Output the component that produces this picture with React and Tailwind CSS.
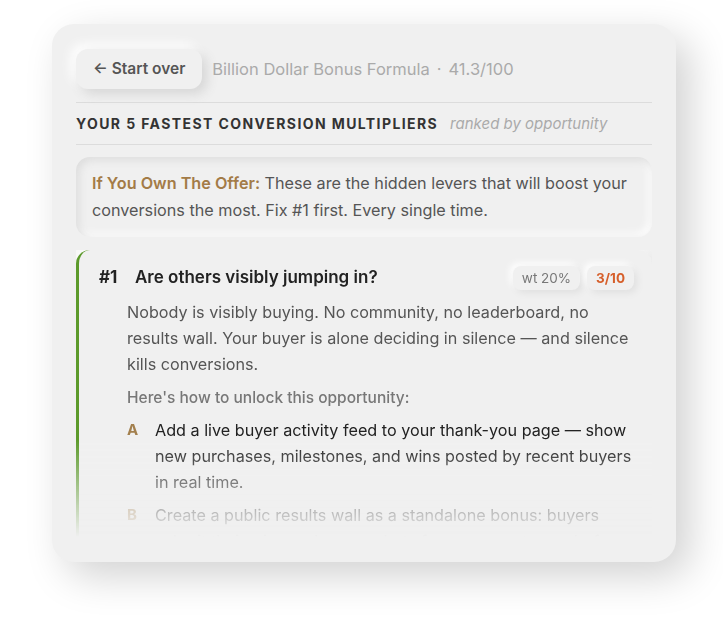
export default function App() {
  return (
    <div className="min-h-[619px] w-full bg-white pt-[24px] pl-[52px]" style={{ fontFamily: "Inter, 'Noto Sans', sans-serif" }}>
      <div className="w-[624px] h-[538px] overflow-hidden rounded-[22px] bg-[#f0f0f0] px-[24px] pt-[25px] shadow-[14px_14px_40px_#d2d2d2,-14px_-14px_40px_#ffffff]">
        <div className="flex items-center gap-[10px]">
          <button className="h-[40px] rounded-[12px] bg-[#f0f0f0] px-[17px] text-[15.5px] font-semibold text-[#555] shadow-[5px_5px_12px_#d6d6d6,-5px_-5px_12px_#ffffff]">
            ← Start over
          </button>
          <div className="text-[16.5px] text-[#aaa]">
            Billion Dollar Bonus Formula<span className="mx-[7px]">·</span>41.3/100
          </div>
        </div>
        <div className="mt-[13px] border-t border-[#dcdcdc]" />
        <div className="flex items-baseline gap-[12px] py-[12px] leading-[17px]">
          <div className="text-[14px] font-bold tracking-[0.1em] text-[#333]">YOUR 5 FASTEST CONVERSION MULTIPLIERS</div>
          <div className="text-[15px] italic text-[#aaa]">ranked by opportunity</div>
        </div>
        <div className="border-t border-[#dcdcdc]" />
        <div className="mt-[12px] rounded-[14px] bg-[#f0f0f0] px-[16px] py-[13px] text-[16.2px] leading-[27px] text-[#555] shadow-[inset_3px_3px_8px_#dcdcdc,inset_-3px_-3px_8px_#ffffff]">
          <span className="font-semibold text-[#a37b47]">If You Own The Offer:</span> These are the hidden levers that will boost your conversions the most. Fix #1 first. Every single time.
        </div>
        <div className="mt-[13px] h-[287px] [mask-image:linear-gradient(to_bottom,black_66%,transparent_100%)]">
          <div className="rounded-[14px] border-l-[3px] border-[#5c9a2b] bg-[#f0f0f0] pl-[20px] pr-[18px] pt-[15px] pb-[20px] shadow-[4px_4px_12px_#e2e2e2,-4px_-4px_12px_#ffffff]">
            <div className="flex items-center">
              <div className="w-[36px] text-[17px] font-bold text-[#222]">#1</div>
              <div className="flex-1 text-[17px] font-semibold text-[#222]">Are others visibly jumping in?</div>
              <div className="flex gap-[7px]">
                <span className="rounded-[8px] bg-[#f0f0f0] px-[9px] py-[2px] text-[13.5px] text-[#777] shadow-[3px_3px_7px_#e0e0e0,-3px_-3px_7px_#ffffff]">wt 20%</span>
                <span className="rounded-[8px] bg-[#f0f0f0] px-[9px] py-[2px] text-[13.5px] font-bold text-[#d65f2b] shadow-[3px_3px_7px_#e0e0e0,-3px_-3px_7px_#ffffff]">3/10</span>
              </div>
            </div>
            <div className="pl-[28px]">
              <p className="mt-[8px] text-[16.2px] leading-[26px] text-[#555]">
                Nobody is visibly buying. No community, no leaderboard, no results wall. Your buyer is alone deciding in silence — and silence kills conversions.
              </p>
              <p className="mt-[9px] text-[15.5px] font-medium text-[#777]">Here's how to unlock this opportunity:</p>
              <div className="mt-[8px] flex">
                <span className="w-[28px] shrink-0 text-[15px] font-bold leading-[26px] text-[#a3804e]">A</span>
                <span className="text-[16.2px] leading-[26px] text-[#222]">
                  Add a live buyer activity feed to your thank-you page — show new purchases, milestones, and wins posted by recent buyers in real time.
                </span>
              </div>
              <div className="mt-[7px] flex">
                <span className="w-[28px] shrink-0 text-[15px] font-bold leading-[26px] text-[#a3804e]">B</span>
                <span className="text-[16.2px] leading-[26px] text-[#222]">
                  Create a public results wall as a standalone bonus: buyers submit their wins and screenshots for everyone to see before they buy.
                </span>
              </div>
            </div>
          </div>
        </div>
      </div>
    </div>
  );
}
